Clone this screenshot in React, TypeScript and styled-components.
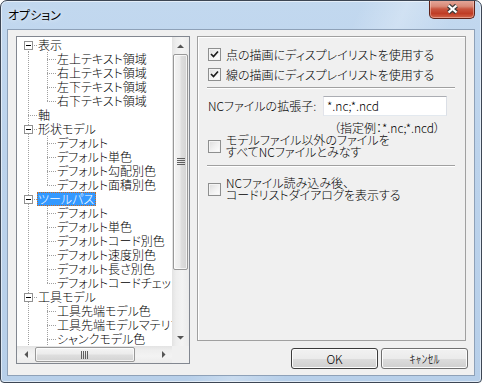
import React from 'react';
import styled, { createGlobalStyle, css } from 'styled-components';

const GlobalStyle = createGlobalStyle`
  html, body {
    margin: 0;
    padding: 0;
    background: #ffffff;
  }
  body {
    font-family: "Noto Sans CJK JP", "Noto Sans", sans-serif;
    font-size: 12px;
    font-weight: 300;
    font-feature-settings: "palt";
    color: #000000;
  }
  * {
    box-sizing: border-box;
  }
`;

type TreeNode = {
    label: string;
    selected?: boolean;
    children?: Array<TreeNode>;
};

type FlatRow = {
    node: TreeNode;
    guides: Array<boolean>;
    first: boolean;
    last: boolean;
};

const treeData: Array<TreeNode> = [
    {
        label: '表示',
        children: [
            { label: '左上テキスト領域' },
            { label: '右上テキスト領域' },
            { label: '左下テキスト領域' },
            { label: '右下テキスト領域' }
        ]
    },
    { label: '軸' },
    {
        label: '形状モデル',
        children: [
            { label: 'デフォルト' },
            { label: 'デフォルト単色' },
            { label: 'デフォルト勾配別色' },
            { label: 'デフォルト面積別色' }
        ]
    },
    {
        label: 'ツールパス',
        selected: true,
        children: [
            { label: 'デフォルト' },
            { label: 'デフォルト単色' },
            { label: 'デフォルトコード別色' },
            { label: 'デフォルト速度別色' },
            { label: 'デフォルト長さ別色' },
            { label: 'デフォルトコードチェック' }
        ]
    },
    {
        label: '工具モデル',
        children: [
            { label: '工具先端モデル色' },
            { label: '工具先端モデルマテリアル' },
            { label: 'シャンクモデル色' },
            { label: 'ホルダモデル色' }
        ]
    },
    { label: '背景' }
];

const flatten = (nodes: Array<TreeNode>, guides: Array<boolean>, out: Array<FlatRow>): Array<FlatRow> => {
    nodes.forEach((node, i) => {
        const last = i === nodes.length - 1;
        out.push({ node, guides, first: guides.length === 0 && i === 0, last });
        if (node.children) flatten(node.children, [...guides, !last], out);
    });
    return out;
};

const rows = flatten(treeData, [], []);

const dotsV = 'repeating-linear-gradient(to bottom, #a0a0a0 0 1px, transparent 1px 2px)';
const dotsH = 'repeating-linear-gradient(to right, #a0a0a0 0 1px, transparent 1px 2px)';

const Arrow = ({ dir }: { dir: 'up' | 'down' | 'left' | 'right' }): JSX.Element => {
    const points = {
        up: '0,4 7,4 3.5,0.5',
        down: '0,0 7,0 3.5,3.5',
        left: '4,0 4,7 0.5,3.5',
        right: '0,0 0,7 3.5,3.5'
    }[dir];
    const vertical = dir === 'up' || dir === 'down';
    return (
        <svg width={vertical ? 7 : 4} height={vertical ? 4 : 7} viewBox={vertical ? '0 0 7 4' : '0 0 4 7'}>
            <polygon points={points} fill="#555555" />
        </svg>
    );
};

const Grip = ({ vertical }: { vertical: boolean }): JSX.Element => (
    <svg width={8} height={8} viewBox="0 0 8 8">
        {[0, 2, 4, 6].map((o) => vertical
            ? <rect key={o} x={0} y={o} width={8} height={1} fill="#5f5f5f" />
            : <rect key={o} x={o} y={0} width={1} height={8} fill="#5f5f5f" />
        )}
    </svg>
);

const CheckBox = ({ checked }: { checked?: boolean }): JSX.Element => (
    <Box>
        {checked && (
            <svg width="9" height="9" viewBox="0 0 9 9">
                <path d="M1 4 L3.5 6.5 L8 1.5" fill="none" stroke="#1c1c1c" strokeWidth="1.7" />
            </svg>
        )}
    </Box>
);

const App = (): JSX.Element => {
    return (
        <>
            <GlobalStyle />
            <Window>
                <TitleBar>
                    <Title>オプション</Title>
                    <CloseButton>
                        <svg width="15" height="12" viewBox="0 0 15 12">
                            <path d="M3.5 2.5 L11.5 9.5 M11.5 2.5 L3.5 9.5" stroke="#3b3b3b" strokeWidth="4.4" />
                            <path d="M3.5 2.5 L11.5 9.5 M11.5 2.5 L3.5 9.5" stroke="#ffffff" strokeWidth="2.2" />
                        </svg>
                    </CloseButton>
                </TitleBar>
                <Client>
                    <TreeBox>
                        <TreeContent>
                            {rows.map((r, i) => (
                                <TreeRow key={i}>
                                    {r.guides.map((g, j) => <Guide key={j} $up={g} $down={g} />)}
                                    <Guide $up={!r.first} $down={!r.last} $branch>
                                        {r.node.children && <Expander />}
                                    </Guide>
                                    <Label $selected={r.node.selected}>{r.node.label}</Label>
                                </TreeRow>
                            ))}
                        </TreeContent>
                        <VScroll>
                            <ArrowButton><Arrow dir="up" /></ArrowButton>
                            <VThumb><Grip vertical /></VThumb>
                            <Track />
                            <ArrowButton><Arrow dir="down" /></ArrowButton>
                        </VScroll>
                        <HScroll>
                            <ArrowButton><Arrow dir="left" /></ArrowButton>
                            <HThumb><Grip vertical={false} /></HThumb>
                            <Track />
                            <ArrowButton><Arrow dir="right" /></ArrowButton>
                        </HScroll>
                        <Corner />
                    </TreeBox>
                    <RightColumn>
                        <Panel>
                            <CheckRow>
                                <CheckBox checked />
                                <CheckText>点の描画にディスプレイリストを使用する</CheckText>
                            </CheckRow>
                            <CheckRow $top={7}>
                                <CheckBox checked />
                                <CheckText>線の描画にディスプレイリストを使用する</CheckText>
                            </CheckRow>
                            <Separator $top={6} />
                            <FieldRow>
                                <FieldLabel>NCファイルの拡張子:</FieldLabel>
                                <TextInput>*.nc;*.ncd</TextInput>
                            </FieldRow>
                            <Hint>（指定例：*.nc;*.ncd）</Hint>
                            <CheckRow $top={0}>
                                <CheckBox />
                                <CheckText $multi>モデルファイル以外のファイルを<br />すべてNCファイルとみなす</CheckText>
                            </CheckRow>
                            <Separator $top={7} />
                            <CheckRow $top={10}>
                                <CheckBox />
                                <CheckText $multi>NCファイル読み込み後、<br />コードリストダイアログを表示する</CheckText>
                            </CheckRow>
                        </Panel>
                        <ButtonRow>
                            <Button $default>OK</Button>
                            <Button>ｷｬﾝｾﾙ</Button>
                        </ButtonRow>
                    </RightColumn>
                </Client>
            </Window>
        </>
    );
};

export default App;

const Window = styled.div`
    width: 482px;
    height: 383px;
    border: 1px solid #3d4654;
    border-radius: 7px 7px 4px 4px;
    padding: 0 6px 6px 6px;
    display: flex;
    flex-direction: column;
    background:
        linear-gradient(115deg, rgba(255, 255, 255, 0) 55%, rgba(255, 255, 255, 0.25) 62%, rgba(255, 255, 255, 0) 70%),
        linear-gradient(to bottom, #c2d8ef 0%, #bcd3ec 40%, #b7cfe9 100%);
    box-shadow: inset 0 0 0 1px rgba(255, 255, 255, 0.55);
    overflow: hidden;
`;

const TitleBar = styled.div`
    height: 28px;
    flex: 0 0 28px;
    display: flex;
    justify-content: space-between;
    align-items: flex-start;
`;

const Title = styled.div`
    margin: 6px 0 0 1px;
    font-size: 12px;
    line-height: 16px;
    font-weight: 400;
    color: #000000;
    text-shadow: 0 0 5px rgba(255, 255, 255, 0.9);
`;

const CloseButton = styled.div`
    width: 46px;
    height: 19px;
    margin-top: -1px;
    border: 1px solid #5d2219;
    border-top: none;
    border-radius: 0 0 5px 5px;
    display: flex;
    align-items: center;
    justify-content: center;
    background: linear-gradient(to bottom, #e6aa9d 0%, #d98a78 35%, #c8553f 50%, #bf3c25 75%, #d2654a 100%);
    box-shadow: inset 0 0 0 1px rgba(255, 220, 210, 0.45);
`;

const Client = styled.div`
    flex: 1;
    border: 1px solid #8ea1b8;
    background: #f0f0f0;
    display: flex;
    align-items: flex-start;
    gap: 7px;
    padding: 6px 6px 0 8px;
`;

const TreeBox = styled.div`
    width: 174px;
    height: 328px;
    border: 1px solid #828790;
    background: #ffffff;
    display: grid;
    grid-template-columns: 1fr 17px;
    grid-template-rows: 1fr 17px;
`;

const TreeContent = styled.div`
    overflow: hidden;
    padding: 1px 0 0 1px;
`;

const TreeRow = styled.div`
    height: 14px;
    display: flex;
    align-items: stretch;
    white-space: nowrap;
`;

const Guide = styled.span<{ $up?: boolean; $down?: boolean; $branch?: boolean }>`
    position: relative;
    flex: 0 0 19px;
    &::before {
        content: '';
        position: absolute;
        left: 10px;
        width: 1px;
        top: ${(p) => (p.$up ? '0' : '7px')};
        bottom: ${(p) => (p.$down ? '0' : '7px')};
        background: ${dotsV};
    }
    &::after {
        content: '';
        display: ${(p) => (p.$branch ? 'block' : 'none')};
        position: absolute;
        left: 10px;
        right: 0;
        top: 7px;
        height: 1px;
        background: ${dotsH};
    }
`;

const Expander = styled.span`
    position: absolute;
    z-index: 1;
    left: 6px;
    top: 3px;
    width: 9px;
    height: 9px;
    border: 1px solid #919191;
    background: #ffffff;
    &::before {
        content: '';
        position: absolute;
        left: 1px;
        top: 3px;
        width: 5px;
        height: 1px;
        background: #000000;
    }
`;

const Label = styled.span<{ $selected?: boolean }>`
    height: 14px;
    line-height: 14px;
    padding: 0 2px 0 1px;
    ${(p) => p.$selected && css`
        background: #3399ff;
        color: #ffffff;
        outline: 1px dotted #cc6a1f;
        outline-offset: -1px;
    `}
`;

const VScroll = styled.div`
    display: flex;
    flex-direction: column;
    background: linear-gradient(to right, #e3e3e3 0%, #eeeeee 25%, #f3f3f3 60%, #ebebeb 100%);
`;

const HScroll = styled.div`
    display: flex;
    background: linear-gradient(to bottom, #e3e3e3 0%, #eeeeee 25%, #f3f3f3 60%, #ebebeb 100%);
`;

const ArrowButton = styled.div`
    flex: 0 0 17px;
    display: flex;
    align-items: center;
    justify-content: center;
`;

const Track = styled.div`
    flex: 1;
`;

const VThumb = styled.div`
    height: 216px;
    margin: 0 1px;
    border: 1px solid #989898;
    border-radius: 2px;
    display: flex;
    align-items: center;
    justify-content: center;
    background: linear-gradient(to right, #f4f4f4 0%, #ececec 45%, #dedede 55%, #d3d3d3 100%);
    box-shadow: inset 0 0 0 1px rgba(255, 255, 255, 0.7);
`;

const HThumb = styled.div`
    width: 100px;
    margin: 1px 0 1px 1px;
    border: 1px solid #989898;
    border-radius: 2px;
    display: flex;
    align-items: center;
    justify-content: center;
    background: linear-gradient(to bottom, #f4f4f4 0%, #ececec 45%, #dedede 55%, #d3d3d3 100%);
    box-shadow: inset 0 0 0 1px rgba(255, 255, 255, 0.7);
`;

const Corner = styled.div`
    background: #f0f0f0;
`;

const RightColumn = styled.div`
    width: 271px;
    display: flex;
    flex-direction: column;
    gap: 7px;
`;

const Panel = styled.div`
    width: 269px;
    height: 305px;
    border: 1px solid #a0a0a0;
    box-shadow: inset 1px 1px 0 #ffffff;
    padding: 11px 10px 0 10px;
    display: flex;
    flex-direction: column;
`;

const CheckRow = styled.div<{ $top?: number }>`
    display: flex;
    align-items: center;
    gap: 5px;
    margin-top: ${(p) => p.$top ?? 0}px;
`;

const Box = styled.span`
    flex: 0 0 13px;
    width: 13px;
    height: 13px;
    border: 1px solid #8e8f8f;
    display: flex;
    align-items: center;
    justify-content: center;
    background: linear-gradient(135deg, #dcdcdc 0%, #f0f0f0 50%, #ffffff 100%);
    box-shadow: inset 0 0 0 1px #f4f4f4;
`;

const CheckText = styled.span<{ $multi?: boolean }>`
    line-height: ${(p) => (p.$multi ? '12px' : '13px')};
    white-space: nowrap;
`;

const Separator = styled.div<{ $top: number }>`
    margin: ${(p) => p.$top}px 0 0 -1px;
    height: 2px;
    border-top: 1px solid #a0a0a0;
    border-bottom: 1px solid #ffffff;
`;

const FieldRow = styled.div`
    margin-top: 7px;
    display: flex;
    align-items: center;
    gap: 6px;
`;

const FieldLabel = styled.span`
    line-height: 14px;
    white-space: nowrap;
`;

const TextInput = styled.div`
    width: 124px;
    height: 20px;
    margin-left: auto;
    margin-right: 8px;
    border: 1px solid #abadb3;
    border-color: #abadb3 #dbdfe6 #e3e9ef #e2e3ea;
    background: #ffffff;
    padding: 0 3px;
    line-height: 18px;
    white-space: nowrap;
`;

const Hint = styled.div`
    margin: 5px 0 0 126px;
    line-height: 13px;
    white-space: nowrap;
`;

const ButtonRow = styled.div`
    display: flex;
    justify-content: flex-end;
    gap: 3px;
`;

const Button = styled.div<{ $default?: boolean }>`
    width: 87px;
    height: 21px;
    border: 1px solid ${(p) => (p.$default ? '#3c3c3c' : '#707070')};
    border-radius: 3px;
    display: flex;
    align-items: center;
    justify-content: center;
    line-height: 14px;
    background: linear-gradient(to bottom, #f2f2f2 0%, #ebebeb 50%, #dddddd 50%, #cfcfcf 100%);
    box-shadow: inset 0 0 0 1px #fcfcfc;
`;
